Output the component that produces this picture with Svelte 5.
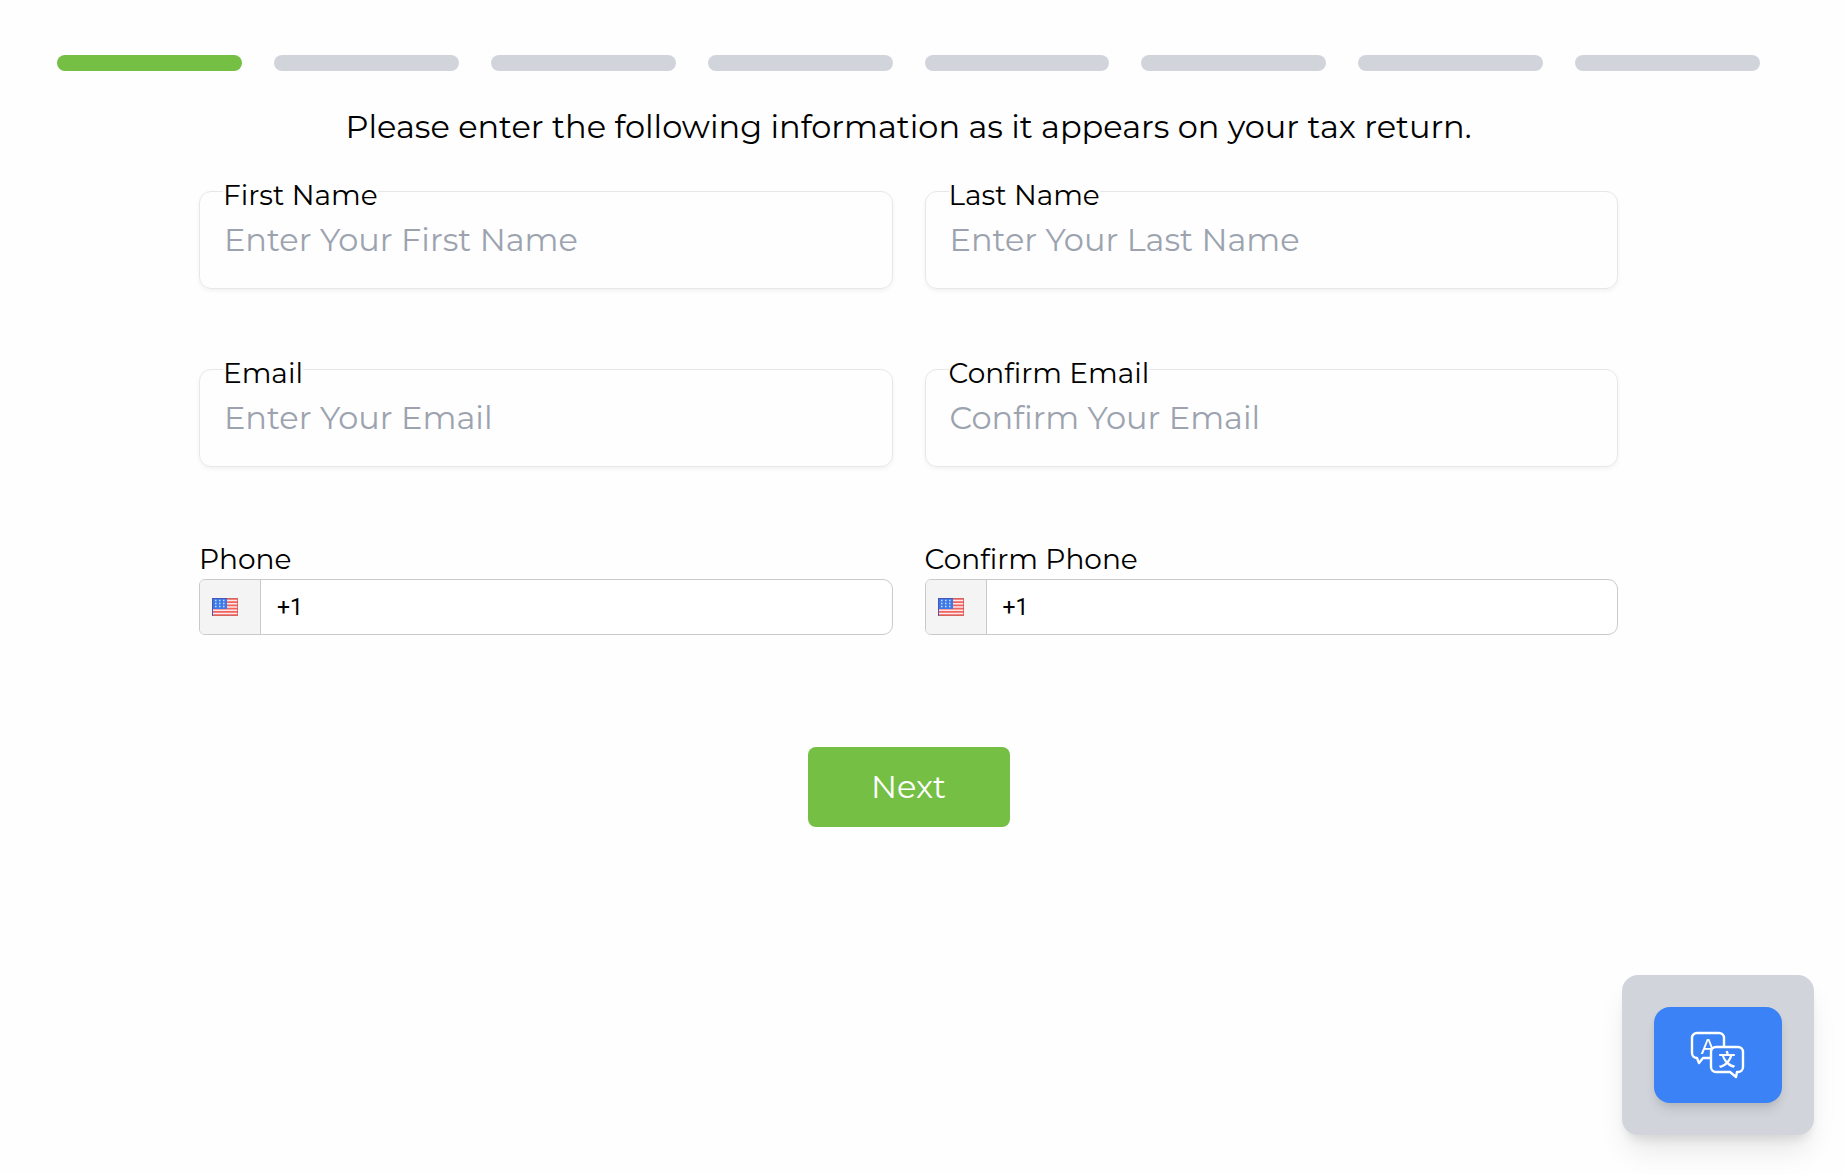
<script>
    let step = 1
    const steps = [1, 2, 3, 4, 5, 6, 7, 8]

    let fields = [
        { id: "firstName", label: "First Name", type: "text", placeholder: "Enter Your First Name", value: "" },
        { id: "lastName", label: "Last Name", type: "text", placeholder: "Enter Your Last Name", value: "" },
        { id: "email", label: "Email", type: "email", placeholder: "Enter Your Email", value: "" },
        { id: "confirmEmail", label: "Confirm Email", type: "email", placeholder: "Confirm Your Email", value: "" },
    ]

    let phones = [
        { id: "phone", label: "Phone", value: "+1" },
        { id: "confirmPhone", label: "Confirm Phone", value: "+1" },
    ]

    function next() {
        if (step < steps.length) {
            step = step + 1
        }
    }
</script>

<main>
    <div class="steps">
        {#each steps as s}
            <div class="step" class:active={s <= step}></div>
        {/each}
    </div>

    <form on:submit|preventDefault={next}>
        <p class="intro">Please enter the following information as it appears on your tax return.</p>

        <div class="grid">
            {#each fields as field}
                <div class="field">
                    <label for={field.id}>{field.label}</label>
                    <input id={field.id} type={field.type} placeholder={field.placeholder} value={field.value} />
                </div>
            {/each}
        </div>

        <div class="grid phones">
            {#each phones as phone}
                <div class="phone">
                    <label for={phone.id}>{phone.label}</label>
                    <div class="phone-box">
                        <button type="button" class="country" aria-label="United States">
                            <svg width="26" height="18" viewBox="0 0 26 18">
                                <rect width="26" height="18" fill="#fbe9e9" />
                                <path
                                    d="M0 1h26M0 4.2h26M0 7.4h26M0 10.6h26M0 13.8h26M0 17h26"
                                    stroke="#f0645f"
                                    stroke-width="1.7"
                                />
                                <rect width="15" height="11" fill="#3c78e6" />
                                <path
                                    d="M3 2.5h10M3 5.5h10M3 8.5h10"
                                    stroke="#c3dcff"
                                    stroke-width="1.5"
                                    stroke-dasharray="1.5 2.5"
                                />
                                <path d="M.5 18V.5H15" fill="none" stroke="#4a55b8" />
                                <path d="M15 .5h10.5v17H.5" fill="none" stroke="#c9534f" stroke-opacity=".7" />
                            </svg>
                        </button>
                        <input id={phone.id} type="tel" value={phone.value} />
                    </div>
                </div>
            {/each}
        </div>

        <button class="next" type="submit">Next</button>
    </form>
</main>

<div class="translate">
    <button type="button" aria-label="Translate">
        <svg width="56" height="48" viewBox="0 0 56 48">
            <g fill="#3b82f6" stroke="#fff" stroke-width="2.4" stroke-linejoin="round">
                <path d="M7 2h22a5 5 0 0 1 5 5v20H13l-4 5-2-5a5 5 0 0 1-5-5V7a5 5 0 0 1 5-5z" />
            </g>
            <text x="18" y="23" class="latin">A</text>
            <path
                d="M26 16h22a5 5 0 0 1 5 5v15a5 5 0 0 1-5 5h-1l-1 5-6-5H26a5 5 0 0 1-5-5V21a5 5 0 0 1 5-5z"
                fill="#3b82f6"
                stroke="#fff"
                stroke-width="2.4"
                stroke-linejoin="round"
            />
            <text x="37" y="35" class="han">文</text>
        </svg>
    </button>
</div>

<style>
    :global(body) {
        margin: 0;
        background: #fefefe;
        color: #000;
        font-family: Montserrat, Inter, "Liberation Sans", sans-serif;
    }
    main {
        padding: 55px 84px 40px 57px;
    }
    .steps {
        display: flex;
        gap: 32px;
    }
    .step {
        flex: 1;
        height: 16px;
        border-radius: 8px;
        background: #d1d5db;
    }
    .step.active {
        background: #74bf44;
    }
    form {
        display: flex;
        flex-direction: column;
        align-items: center;
        width: 83.3333%;
        margin: 0 auto;
    }
    .intro {
        margin: 32px 0 40px;
        font-size: 32px;
        line-height: 48px;
        text-align: center;
    }
    .grid {
        display: grid;
        grid-template-columns: 1fr 1fr;
        gap: 80px 32px;
        width: 100%;
    }
    label {
        font-size: 28px;
        line-height: 40px;
    }
    .field {
        position: relative;
    }
    /* label sits over the top border of its input */
    .field label {
        position: absolute;
        top: -16px;
        left: 24px;
        background: #fefefe;
    }
    input {
        box-sizing: border-box;
        font-family: inherit;
        color: #000;
        background: transparent;
    }
    .field input {
        display: block;
        width: 100%;
        height: 98px;
        padding: 0 24px 2px;
        font-size: 32px;
        border: 1px solid #e5e7eb;
        border-radius: 12px;
        box-shadow: 0 2px 4px rgba(0, 0, 0, 0.05);
    }
    input::placeholder {
        color: #9ca3af;
        opacity: 1;
    }
    .phones {
        margin-top: 72px;
    }
    .phone label {
        display: block;
    }
    .phone-box {
        display: flex;
        box-sizing: border-box;
        height: 56px;
        border: 1px solid #cacaca;
        border-radius: 6px 10px 10px 6px;
        background: #fff;
        overflow: hidden;
    }
    .country {
        display: flex;
        align-items: center;
        box-sizing: border-box;
        width: 61px;
        padding: 0 12px;
        border: 0;
        border-right: 1px solid #cacaca;
        background: #f4f4f4;
    }
    .phone-box input {
        flex: 1;
        min-width: 0;
        padding: 0 16px;
        border: 0;
        font-family: Roboto, sans-serif;
        font-size: 23px;
    }
    .next {
        width: 202px;
        height: 80px;
        margin-top: 112px;
        padding: 0 0 2px;
        border: 0;
        border-radius: 8px;
        background: #74bf44;
        color: #fff;
        font-family: inherit;
        font-size: 32px;
    }
    .translate {
        position: fixed;
        right: 30px;
        bottom: 39px;
        padding: 32px;
        border-radius: 16px;
        background: #d1d5db;
        box-shadow: 0 20px 30px -6px rgba(0, 0, 0, 0.1), 0 8px 12px -4px rgba(0, 0, 0, 0.1);
    }
    .translate button {
        display: flex;
        align-items: center;
        justify-content: center;
        width: 128px;
        height: 96px;
        padding: 0;
        border: 0;
        border-radius: 16px;
        background: #3b82f6;
        box-shadow: 0 8px 12px -2px rgba(0, 0, 0, 0.1), 0 4px 8px -4px rgba(0, 0, 0, 0.1);
    }
    text {
        fill: #fff;
        text-anchor: middle;
    }
    .latin {
        font-size: 22px;
        font-weight: 500;
    }
    .han {
        font-family: "Noto Sans CJK SC", sans-serif;
        font-size: 17px;
        font-weight: 700;
    }
</style>
